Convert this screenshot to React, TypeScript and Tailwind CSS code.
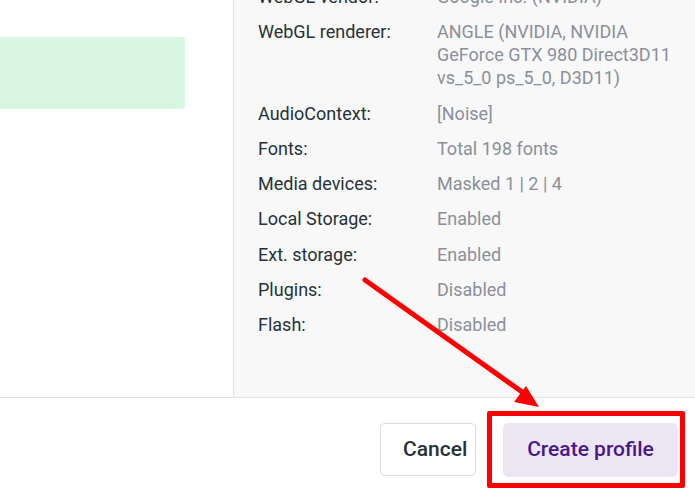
const rows: { label: string; value: string[] }[] = [
  { label: "WebGL vendor:", value: ["Google Inc. (NVIDIA)"] },
  {
    label: "WebGL renderer:",
    value: ["ANGLE (NVIDIA, NVIDIA", "GeForce GTX 980 Direct3D11", "vs_5_0 ps_5_0, D3D11)"],
  },
  { label: "AudioContext:", value: ["[Noise]"] },
  { label: "Fonts:", value: ["Total 198 fonts"] },
  { label: "Media devices:", value: ["Masked 1 | 2 | 4"] },
  { label: "Local Storage:", value: ["Enabled"] },
  { label: "Ext. storage:", value: ["Enabled"] },
  { label: "Plugins:", value: ["Disabled"] },
  { label: "Flash:", value: ["Disabled"] },
]

export default function App() {
  return (
    <div className="relative w-[695px] h-[496px] overflow-hidden bg-white font-['Roboto',sans-serif]">
      <div className="flex h-[398px] border-b border-[#e3e3e8]">
        <div className="w-[234px] shrink-0 border-r border-[#e3e3e8] pt-[37px]">
          <div className="w-[185px] h-[72px] rounded-r-[3px] bg-[#d9f6e1]" />
        </div>
        <div className="flex-1 bg-[#f8f8f9] overflow-hidden pl-6">
          <div className="mt-[-15px] flex flex-col gap-[12.3px] text-[18px] leading-[23px]">
            {rows.map((r) => (
              <div key={r.label} className="flex">
                <div className="w-[179px] shrink-0 text-[#263238]">{r.label}</div>
                <div className="text-[#8a9099]">
                  {r.value.map((v) => (
                    <div key={v}>{v}</div>
                  ))}
                </div>
              </div>
            ))}
          </div>
        </div>
      </div>
      <div className="flex justify-end items-start gap-[27px] pt-[25px] pr-[17px]">
        <button className="h-[53px] w-[96px] rounded-[5px] border border-[#dcdce0] bg-white pl-[22px] text-left text-[21px] font-medium text-[#263238]">
          Cancel
        </button>
        <button className="h-[54px] w-[175px] rounded-[5px] bg-[#ece6f2] text-[21px] font-medium text-[#4a1788]">
          Create profile
        </button>
      </div>

      {/* annotation */}
      <div className="absolute left-[487px] top-[411px] w-[198px] h-[77px] border-[5px] border-[#ff0000] rounded-[2px]" />
      <svg className="absolute left-0 top-0" width="695" height="496" viewBox="0 0 695 496">
        <line x1="365" y1="280" x2="525" y2="394" stroke="#ff0000" strokeWidth="5" strokeLinecap="round" />
        <polygon points="539,407 514,402 526,386" fill="#ff0000" />
      </svg>
    </div>
  )
}
